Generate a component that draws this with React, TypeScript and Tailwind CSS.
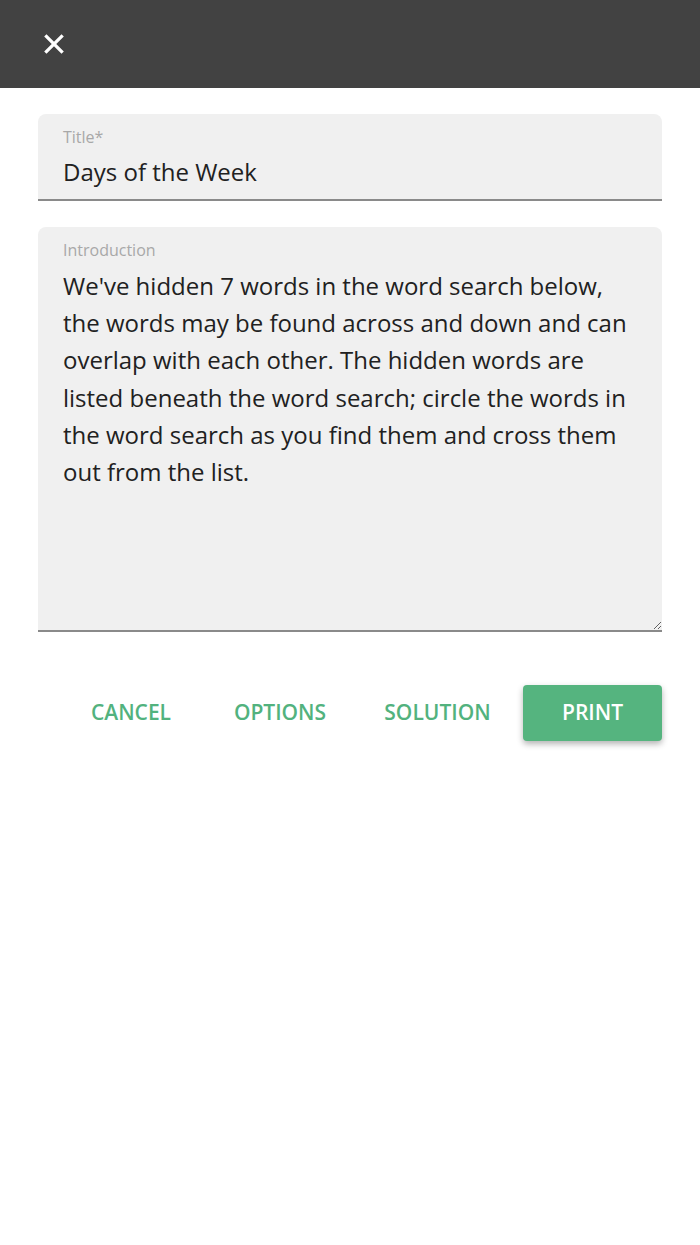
import { useState } from "react";

const intro =
  "We've hidden 7 words in the word search below, the words may be found across and down and can overlap with each other. The hidden words are listed beneath the word search; circle the words in the word search as you find them and cross them out from the list.";

export default function App() {
  const [title, setTitle] = useState("Days of the Week");
  const [text, setText] = useState(intro);

  return (
    <main
      className="min-h-[1245px] bg-white text-[#212121]"
      style={{ fontFamily: '"Open Sans", "Noto Sans", sans-serif' }}
    >
      <header className="flex h-[88px] items-center bg-[#424242] px-[30px]">
        <button type="button" className="flex h-[48px] w-[48px] items-center justify-center">
          <svg width="26" height="26" viewBox="0 0 24 24" fill="none">
            <path d="M4 4L20 20M20 4L4 20" stroke="white" strokeWidth="3" strokeLinecap="butt" />
          </svg>
        </button>
      </header>

      <div className="flex flex-col px-[38px] pt-[26px]">
        <label className="flex flex-col rounded-t-[8px] border-b-2 border-[#8a8a8a] bg-[#f0f0f0] px-[25px] pb-[10px] pt-[11px]">
          <span className="text-[16px] leading-[24px] text-[#a8a8a8]">Title*</span>
          <input
            value={title}
            onChange={(event) => setTitle(event.target.value)}
            className="mt-[6px] bg-transparent text-[24px] leading-[34px] text-[#212121] outline-none"
            style={{ fontFamily: '"Open Sans", "Noto Sans", sans-serif' }}
          />
        </label>

        <label className="mt-[26px] flex flex-col rounded-t-[8px] border-b-2 border-[#8a8a8a] bg-[#f0f0f0] pl-[25px] pt-[11px]">
          <span className="text-[16px] leading-[24px] text-[#a8a8a8]">Introduction</span>
          <textarea
            value={text}
            onChange={(event) => setText(event.target.value)}
            className="mt-[5px] h-[363px] w-full bg-transparent pr-[25px] text-[24px] leading-[37.2px] text-[#212121] outline-none"
            style={{ fontFamily: '"Open Sans", "Noto Sans", sans-serif' }}
          />
        </label>

        <div className="mt-[53px] flex items-center justify-end">
          <button type="button" className="mr-[29px] h-[56px] w-[114px] text-[21px] font-semibold text-[#52b27e]">
            CANCEL
          </button>
          <button type="button" className="mr-[25px] h-[56px] w-[126px] text-[21px] font-semibold text-[#52b27e]">
            OPTIONS
          </button>
          <button type="button" className="mr-[16px] h-[56px] w-[139px] text-[21px] font-semibold text-[#52b27e]">
            SOLUTION
          </button>
          <button
            type="button"
            className="h-[56px] w-[139px] rounded-[4px] bg-[#55b47f] text-[21px] font-semibold text-white shadow-[0_3px_6px_rgba(0,0,0,0.3)]"
          >
            PRINT
          </button>
        </div>
      </div>
    </main>
  );
}
